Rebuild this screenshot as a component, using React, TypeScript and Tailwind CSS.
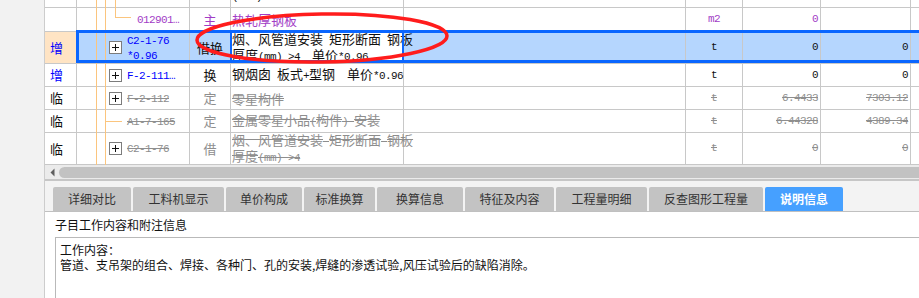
import React from 'react';

const CJK_SPLIT = /([\u2e80-\u9fff\u3000-\u303f\uff00-\uffef]+)/;
const CJK_ONLY = /^[\u2e80-\u9fff\u3000-\u303f\uff00-\uffef]+$/;

// CJK runs in Noto, latin runs in a narrow mono (the original grid uses a SimSun-like font)
function Mix({ text, struck }: { text: string; struck?: boolean }) {
  return (
    <>
      {text
        .split(CJK_SPLIT)
        .filter(Boolean)
        .map((part, i) =>
          CJK_ONLY.test(part) ? (
            <span key={i} className={`font-['Noto_Sans_CJK_SC',sans-serif] text-[13px] ${struck ? 'line-through' : ''}`}>
              {part}
            </span>
          ) : (
            <span
              key={i}
              className={`font-['Liberation_Mono',monospace] text-[11px] tracking-[-0.6px] whitespace-pre ${struck ? 'line-through' : ''}`}
            >
              {part}
            </span>
          )
        )}
    </>
  );
}

type Tone = 'purple' | 'blue' | 'void' | 'plain';

interface Row {
  h: string;
  flag?: string;
  code: string[];
  node: 'box' | 'corner' | 'line' | 'none';
  kind: string;
  desc: string[];
  unit: string;
  qty: string;
  total: string;
  tone: Tone;
  selected?: boolean;
  deep?: boolean;
}

const rows: Row[] = [
  { h: 'h-[23px] -mt-[15px]', code: [], node: 'none', kind: '', desc: ['(000)'], unit: '', qty: '', total: '', tone: 'plain', deep: true },
  { h: 'h-[24px]', code: ['012901…'], node: 'corner', kind: '主', desc: ['热轧厚钢板'], unit: 'm2', qty: '0', total: '', tone: 'purple' },
  {
    h: 'h-[32px]',
    flag: '增',
    code: ['C2-1-76', '*0.96'],
    node: 'box',
    kind: '借换',
    desc: ['烟、风管道安装 矩形断面 钢板', '厚度(mm) >4  单价*0.96'],
    unit: 't',
    qty: '0',
    total: '0',
    tone: 'blue',
    selected: true,
  },
  { h: 'h-[23px]', flag: '增', code: ['F-2-111…'], node: 'box', kind: '换', desc: ['钢烟囱 板式+型钢  单价*0.96'], unit: 't', qty: '0', total: '0', tone: 'blue' },
  { h: 'h-[23px]', flag: '临', code: ['F-2-112'], node: 'box', kind: '定', desc: ['零星构件'], unit: 't', qty: '6.4433', total: '7303.12', tone: 'void' },
  { h: 'h-[23px]', flag: '临', code: ['A1-7-165'], node: 'line', kind: '定', desc: ['金属零星小品(构件) 安装'], unit: 't', qty: '6.44328', total: '4389.34', tone: 'void' },
  { h: 'h-[32px]', flag: '临', code: ['C2-1-76'], node: 'box', kind: '借', desc: ['烟、风管道安装 矩形断面 钢板', '厚度(mm) >4'], unit: 't', qty: '0', total: '0', tone: 'void' },
];

const tabs = [
  { label: '详细对比', w: 'w-[78px]' },
  { label: '工料机显示', w: 'w-[91px]' },
  { label: '单价构成', w: 'w-[76px]' },
  { label: '标准换算', w: 'w-[71px]' },
  { label: '换算信息', w: 'w-[86px]' },
  { label: '特征及内容', w: 'w-[89px]' },
  { label: '工程量明细', w: 'w-[91px]' },
  { label: '反查图形工程量', w: 'w-[114px]' },
  { label: '说明信息', w: 'w-[78px]', active: true },
];

function PlusBox() {
  return (
    <svg width="13" height="13" viewBox="0 0 13 13" className="shrink-0">
      <rect x="0.5" y="0.5" width="12" height="12" fill="#fff" stroke="#7c7c7c" />
      <path d="M3 6.5h7M6.5 3v7" stroke="#111" strokeWidth="1" />
    </svg>
  );
}

function GridRow({ row }: { row: Row }) {
  const isVoid = row.tone === 'void';
  const codeColor =
    row.tone === 'purple' ? 'text-[#a23cc6]' : row.tone === 'blue' ? 'text-[#0000ff]' : isVoid ? 'text-[#8e8e8e]' : 'text-[#222]';
  const kindColor = row.tone === 'purple' ? 'text-[#a23cc6]' : isVoid ? 'text-[#8e8e8e]' : 'text-[#111]';
  const textColor = row.tone === 'purple' ? 'text-[#a23cc6]' : isVoid ? 'text-[#8e8e8e]' : 'text-[#111]';

  return (
    <div className={`flex shrink-0 border-b border-[#c8c8c8] relative ${row.h} ${row.selected ? 'bg-[#b5d6fe]' : 'bg-white'}`}>
      <div
        className={`w-[32px] shrink-0 border-r border-[#c8c8c8] flex items-center pl-[5px] ${row.selected ? 'bg-[#ffe4c4]' : ''} ${
          row.flag === '增' ? 'text-[#0000ff]' : 'text-[#111]'
        }`}
      >
        {row.flag && <Mix text={row.flag} />}
      </div>

      <div className="w-[113px] shrink-0 border-r border-[#c8c8c8] relative flex items-center">
        <span className="absolute left-[19px] top-0 bottom-[-1px] w-px bg-[#fbc57e]" />
        <span className="absolute left-[28px] top-0 bottom-[-1px] w-px bg-[#fbc57e]" />
        {row.deep && <span className="absolute left-[38px] top-0 bottom-[-1px] w-px bg-[#fbc57e]" />}
        {row.node === 'corner' && (
          <>
            <span className="absolute left-[38px] top-0 h-[10px] w-px bg-[#fbc57e]" />
            <span className="absolute left-[38px] top-[9px] w-[16px] h-px bg-[#fbc57e]" />
          </>
        )}
        {row.node === 'line' && <span className="absolute left-[28px] top-[11px] w-[17px] h-px bg-[#fbc57e]" />}
        {row.node === 'box' && (
          <div className="ml-[32px] mr-[5px] flex items-center">
            <PlusBox />
          </div>
        )}
        {row.node === 'line' && <div className="w-[50px] shrink-0" />}
        {row.node === 'corner' && <div className="w-[60px] shrink-0" />}
        <div className={`flex flex-col leading-[12px] pb-[2px] ${codeColor}`}>
          {row.code.map((c) => (
            <div key={c} className="whitespace-nowrap">
              <Mix text={c} struck={isVoid} />
            </div>
          ))}
        </div>
      </div>

      <div className={`w-[41px] shrink-0 border-r border-[#c8c8c8] flex items-center justify-center ${kindColor}`}>
        <Mix text={row.kind} />
      </div>

      <div
        className={`w-[173px] shrink-0 border-r border-[#c8c8c8] relative flex flex-col justify-center pl-[1px] leading-[13px] ${
          row.selected ? 'bg-white' : ''
        } ${textColor}`}
      >
        {row.desc.map((d) => (
          <div key={d} className="whitespace-nowrap">
            <Mix text={d} struck={isVoid} />
          </div>
        ))}
        {row.selected && <span className="absolute top-0 bottom-0 -left-[1px] -right-[1px] border-x-2 border-[#0a66ff]" />}
      </div>

      <div className="w-[282px] shrink-0 border-r border-[#c8c8c8]" />

      <div className={`w-[57px] shrink-0 border-r border-[#c8c8c8] flex items-center justify-center ${textColor}`}>
        <Mix text={row.unit} struck={isVoid} />
      </div>
      <div className={`w-[78px] shrink-0 border-r border-[#c8c8c8] flex items-center justify-end pr-[2px] ${textColor}`}>
        <Mix text={row.qty} struck={isVoid} />
      </div>
      <div className={`w-[90px] shrink-0 border-r border-[#c8c8c8] flex items-center justify-end pr-[2px] ${textColor}`}>
        <Mix text={row.total} struck={isVoid} />
      </div>
      <div className="flex-1" />

      {row.selected && <span className="absolute -top-[2px] bottom-0 left-[31px] -right-[4px] border-[3px] border-[#0a66ff] pointer-events-none" />}
    </div>
  );
}

export default function App() {
  return (
    <div className="relative w-[919px] h-[298px] overflow-hidden flex bg-[#f2f2f2] text-[#111]">
      {/* left frame strip */}
      <div className="w-[45px] shrink-0 bg-[#f2f2f2] border-r border-[#cdcdcd]" />

      <div className="flex-1 flex flex-col min-w-0">
        {/* grid */}
        <div className="h-[165px] shrink-0 overflow-hidden bg-white flex flex-col">
          {rows.map((r, i) => (
            <GridRow key={i} row={r} />
          ))}
        </div>

        {/* horizontal scrollbar */}
        <div className="h-[14px] shrink-0 bg-[#ebebeb] flex items-start pt-[2px] pl-[5px]">
          <svg width="5" height="11" viewBox="0 0 5 11" className="shrink-0">
            <path d="M0.5 5.5L4.5 1.5v8z" fill="#5e5e5e" />
          </svg>
          <div className="ml-[4px] flex-1 h-[11px] rounded-l-full bg-[#c2c2c2]" />
        </div>
        <div className="h-[2px] shrink-0 bg-[#c6c6c6]" />

        {/* tabs */}
        <div className="h-[31px] shrink-0 flex items-end gap-[2px] pl-[8px] border-b border-[#c0c0c0] bg-[#f3f3f3] font-['Noto_Sans_CJK_SC',sans-serif] text-[12px]">
          {tabs.map((t) => (
            <div
              key={t.label}
              className={`${t.w} h-[24px] shrink-0 rounded-t-[2px] flex items-center justify-center ${
                t.active ? 'bg-[#46a0ff] text-white font-bold' : 'bg-[#c3c3c3] text-[#333]'
              }`}
            >
              {t.label}
            </div>
          ))}
        </div>

        {/* description panel */}
        <div className="flex-1 bg-white pl-[10px] pt-[4px] font-['Noto_Sans_CJK_SC',sans-serif] text-[12px] text-[#111]">
          <div className="leading-[18px]">子目工作内容和附注信息</div>
          <div className="mt-[3px] w-[900px] h-[80px] border border-[#b9b9b9] pl-[4px] pt-[4px] leading-[15px]">
            <div>工作内容：</div>
            <div>管道、支吊架的组合、焊接、各种门、孔的安装,焊缝的渗透试验,风压试验后的缺陷消除。</div>
          </div>
        </div>
      </div>

      {/* red annotation ellipse */}
      <svg className="absolute inset-0 pointer-events-none" width="919" height="298">
        <ellipse cx="322" cy="38" rx="125" ry="24" transform="rotate(-1 322 38)" fill="none" stroke="#ff1c1c" strokeWidth="3.5" />
      </svg>
    </div>
  );
}
